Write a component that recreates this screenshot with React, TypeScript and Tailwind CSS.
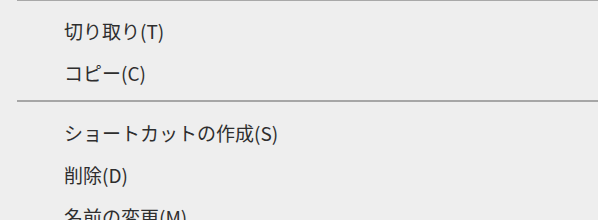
import React from 'react'

const items1 = ['切り取り(T)', 'コピー(C)']
const items2 = ['ショートカットの作成(S)', '削除(D)', '名前の変更(M)']

const MenuItem = ({ label }: { label: string }) => (
    <div className="h-[42px] flex items-center pl-[64px] text-[19px] text-[#2e2e2e] leading-none">
        {label}
    </div>
)

const App = () => {
    return (
        <div
            className="w-[598px] h-[220px] overflow-hidden bg-[#eeeeee]"
            style={{ fontFamily: '"Noto Sans CJK JP", "Noto Sans", sans-serif' }}
        >
            <div className="ml-[17px] h-px bg-[#a8a8a8]" />
            <div className="pt-[8px]">
                {items1.map((label) => (
                    <MenuItem key={label} label={label} />
                ))}
                <div className="ml-[17px] mt-[7px] mb-[9px] h-[2px] bg-[#a6a6a6]" />
                {items2.map((label) => (
                    <MenuItem key={label} label={label} />
                ))}
            </div>
        </div>
    )
}

export default App
